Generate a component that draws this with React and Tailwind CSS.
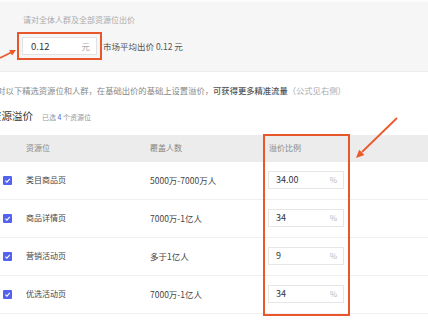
const rows = [
  { name: "类目商品页", count: "5000万-7000万人", ratio: "34.00" },
  { name: "商品详情页", count: "7000万-1亿人", ratio: "34" },
  { name: "营销活动页", count: "多于1亿人", ratio: "9" },
  { name: "优选活动页", count: "7000万-1亿人", ratio: "34" },
];

function Check() {
  return (
    <span className="ml-[3px] flex h-[9px] w-[9px] items-center justify-center rounded-[1px] bg-[#5463ee]">
      <svg width="7" height="7" viewBox="0 0 10 10">
        <path d="M2 5.2 L4.2 7.3 L8.2 2.8" fill="none" stroke="#fff" strokeWidth="1.6" />
      </svg>
    </span>
  );
}

export default function App() {
  return (
    <div
      className="relative h-[327px] w-[428px] overflow-hidden bg-white"
      style={{ fontFamily: '"Noto Sans CJK SC", "Noto Sans", sans-serif' }}
    >
      <div className="h-[72px] border-t-2 border-b border-t-[#fbfbfb] border-b-[#ececec] bg-[#f6f6f6] pl-[17px] pt-[14px]">
        <div className="ml-[6px] text-[8px] leading-[8px] text-[#aaa]">请对全体人群及全部资源位出价</div>
        <div className="mt-[8px] flex items-center">
          <div className="h-[28px] w-[85px] border-2 border-[#e8562c] p-[3px]">
            <div className="flex h-full items-center justify-between border border-[#e2e2e2] bg-white pl-[8px] pr-[6px]">
              <span className="text-[9.5px] text-[#333]">0.12</span>
              <span className="text-[8.5px] text-[#aaa]">元</span>
            </div>
          </div>
          <span className="ml-[1px] text-[8.5px] text-[#555]">市场平均出价 0.12 元</span>
        </div>
      </div>

      <div className="ml-[-11px] mt-[13px] whitespace-nowrap text-[8.3px] leading-[10px] text-[#888]">
        针对以下精选资源位和人群，在基础出价的基础上设置溢价，
        <span className="font-medium text-[#555]">可获得更多精准流量</span>
        <span className="text-[#aaa]">（公式见右侧）</span>
      </div>

      <div className="ml-[-9px] mt-[15px] flex items-baseline">
        <span className="text-[10.5px] leading-[12px] text-[#333]">资源溢价</span>
        <span className="ml-[9px] text-[7px] text-[#999]">
          已选 <span className="text-[#4f5fe8]">4</span> 个资源位
        </span>
      </div>

      <div className="mt-[12px] flex h-[27px] items-center bg-[#ececec] text-[8px] text-[#888]">
        <div className="w-[26px]" />
        <div className="w-[124px]">资源位</div>
        <div className="w-[118px]">覆盖人数</div>
        <div className="pl-[1px]">溢价比例</div>
      </div>

      {rows.map((r) => (
        <div key={r.name} className="flex h-[38px] items-center border-b border-[#f0f0f0] text-[8.5px] text-[#444]">
          <div className="w-[26px]">
            <Check />
          </div>
          <div className="w-[124px] text-[8px]">{r.name}</div>
          <div className="w-[118px]">{r.count}</div>
          <div className="flex h-[18px] w-[76px] items-center justify-between border border-[#e6e6e6] bg-white pl-[7px] pr-[6px]">
            <span className="text-[9px] text-[#333]">{r.ratio}</span>
            <span className="text-[8px] text-[#bbb]">%</span>
          </div>
        </div>
      ))}

      <div className="pointer-events-none absolute left-[263px] top-[134px] h-[182px] w-[87px] border-2 border-[#e8562c]" />

      <svg className="pointer-events-none absolute left-0 top-0" width="428" height="327">
        <line x1="0" y1="58" x2="11" y2="52.5" stroke="#ea5a2c" strokeWidth="1.8" />
        <polygon points="16,50 12,55.6 9.2,50" fill="#ea5a2c" />
        <line x1="397" y1="118" x2="362" y2="152" stroke="#ea5a2c" strokeWidth="1.8" />
        <polygon points="356,158 364.4,155 359.2,149.8" fill="#ea5a2c" />
      </svg>
    </div>
  );
}
